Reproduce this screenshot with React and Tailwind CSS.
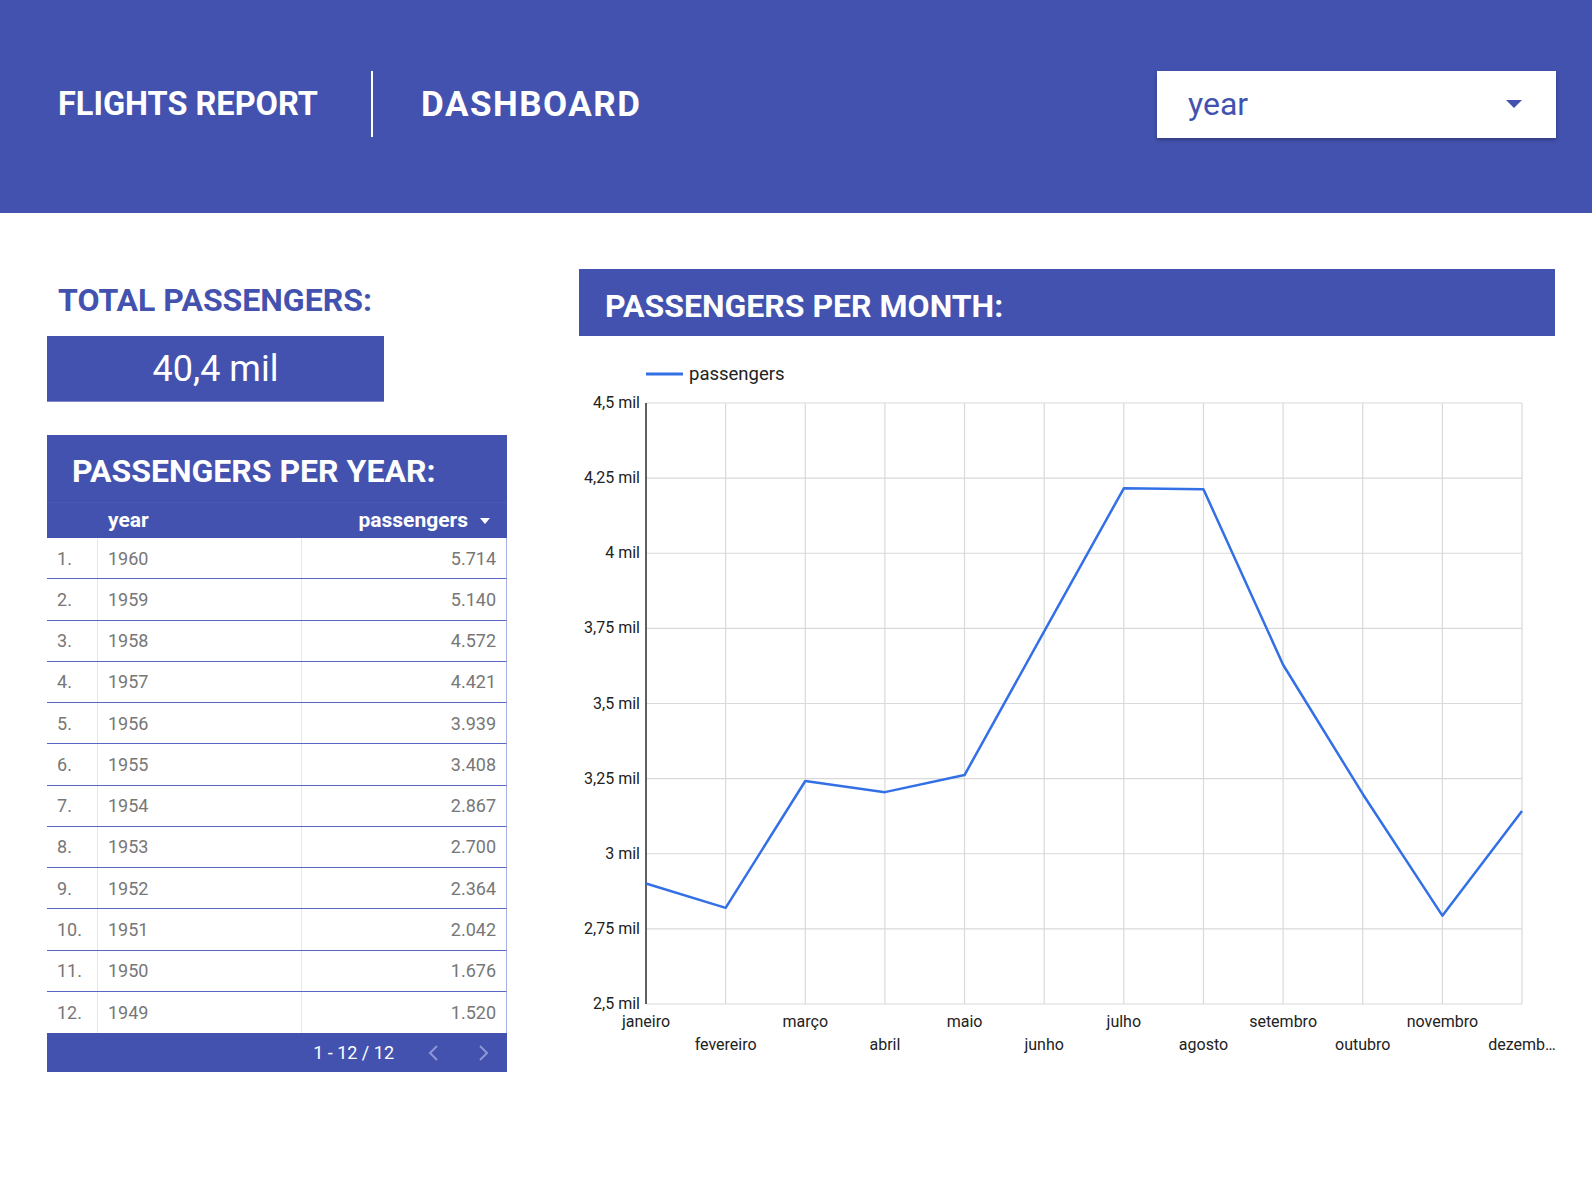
import React from "react";

const years = [
  ["1960", "5.714"],
  ["1959", "5.140"],
  ["1958", "4.572"],
  ["1957", "4.421"],
  ["1956", "3.939"],
  ["1955", "3.408"],
  ["1954", "2.867"],
  ["1953", "2.700"],
  ["1952", "2.364"],
  ["1951", "2.042"],
  ["1950", "1.676"],
  ["1949", "1.520"],
];

const months = [
  ["janeiro", 2901],
  ["fevereiro", 2820],
  ["março", 3242],
  ["abril", 3205],
  ["maio", 3262],
  ["junho", 3740],
  ["julho", 4216],
  ["agosto", 4213],
  ["setembro", 3629],
  ["outubro", 3199],
  ["novembro", 2794],
  ["dezemb…", 3142],
];

const yTicks = ["4,5 mil", "4,25 mil", "4 mil", "3,75 mil", "3,5 mil", "3,25 mil", "3 mil", "2,75 mil", "2,5 mil"];

function Chart() {
  const x0 = 67;
  const x1 = 943;
  const y0 = 67;
  const y1 = 668;
  const step = (x1 - x0) / 11;
  const yOf = (v) => y0 + ((4500 - v) / 2000) * (y1 - y0);
  const pts = months.map((m, i) => `${x0 + i * step},${yOf(m[1])}`).join(" ");
  return (
    <svg width="976" height="730" viewBox="0 0 976 730" style={{ fontFamily: "Roboto, 'Liberation Sans', sans-serif" }}>
      <line x1="67" y1="38" x2="104" y2="38" stroke="#3370e6" strokeWidth="3" />
      <text x="110" y="44" fontSize="18.5" fill="#222">passengers</text>
      {yTicks.map((t, i) => {
        const y = y0 + (i * (y1 - y0)) / 8;
        return (
          <g key={t}>
            <line x1={x0} y1={y} x2={x1} y2={y} stroke="#d9d9d9" strokeWidth="1.2" />
            <text x="61" y={y + 5} fontSize="16" fill="#222" textAnchor="end">{t}</text>
          </g>
        );
      })}
      {months.map((m, i) => {
        const x = x0 + i * step;
        return (
          <g key={m[0]}>
            <line x1={x} y1={y0} x2={x} y2={y1} stroke="#d9d9d9" strokeWidth="1.2" />
            <text x={x} y={i % 2 === 0 ? 691 : 714} fontSize="16" fill="#222" textAnchor="middle">{m[0]}</text>
          </g>
        );
      })}
      <line x1={x0} y1={y0} x2={x0} y2={y1} stroke="#333" strokeWidth="1.5" />
      <polyline points={pts} fill="none" stroke="#3370e6" strokeWidth="2.5" strokeLinejoin="round" />
    </svg>
  );
}

export default function App() {
  return (
    <div className="w-[1592px] h-[1190px] bg-white overflow-hidden" style={{ fontFamily: "Roboto, 'Liberation Sans', sans-serif" }}>
      <div className="h-[213px] bg-[#4352af] flex items-center pb-[5px]">
        <div className="w-[371px] pl-[58px] text-white text-[32.5px] font-bold leading-none whitespace-nowrap">FLIGHTS REPORT</div>
        <div className="w-[2px] h-[66px] bg-white"></div>
        <div className="ml-[48px] text-white text-[35px] font-bold leading-none tracking-[1.5px]">DASHBOARD</div>
        <div className="ml-auto mr-[36px] w-[399px] h-[67px] bg-white shadow-[0_2px_4px_rgba(0,0,0,0.3)] flex items-center pl-[31px] pr-[34px]">
          <span className="text-[32px] text-[#4352af] leading-none">year</span>
          <svg className="ml-auto" width="16" height="8" viewBox="0 0 16 8">
            <polygon points="0,0 16,0 8,8" fill="#4352af" />
          </svg>
        </div>
      </div>
      <div className="flex items-start">
        <div className="ml-[47px] w-[460px] pt-[71px]">
          <div className="pl-[11px] text-[32px] font-bold leading-none text-[#4352af] whitespace-nowrap">TOTAL PASSENGERS:</div>
          <div className="mt-[20px] w-[337px] h-[66px] bg-[#4352af] border-b border-[#7d88cf] flex items-center justify-center text-white text-[36px] leading-none">40,4 mil</div>
          <div className="mt-[33px]">
            <div className="h-[67px] bg-[#4352af] flex items-center pl-[25px] pt-[4px] text-white text-[32px] font-bold leading-none">PASSENGERS PER YEAR:</div>
            <div className="h-[36px] bg-[#4352af] flex items-center text-white text-[21px] font-bold border-t border-[#4a59b4]">
              <div className="w-[51px]"></div>
              <div className="w-[204px] pl-[10px]">year</div>
              <div className="flex-1 flex items-center justify-end pr-[17px]">
                <span>passengers</span>
                <svg className="ml-[12px]" width="10" height="6" viewBox="0 0 10 6">
                  <polygon points="0,0 10,0 5,6" fill="#fff" />
                </svg>
              </div>
            </div>
            {years.map((r, i) => (
              <div
                key={r[0]}
                className={`h-[41.25px] flex items-stretch text-[18px] text-[#777] border-r border-[#a7afe0] ${i < 11 ? "border-b-[1.5px] border-b-[#5866c2]" : ""}`}
              >
                <div className="w-[51px] pl-[10px] flex items-center border-r border-[#e4e6f6]">{i + 1}.</div>
                <div className="w-[204px] pl-[10px] flex items-center border-r border-[#e4e6f6]">{r[0]}</div>
                <div className="flex-1 pr-[10px] flex items-center justify-end">{r[1]}</div>
              </div>
            ))}
            <div className="h-[39px] bg-[#4352af] flex items-center justify-end pr-[17px] text-white text-[18px]">
              <span>1 - 12 / 12</span>
              <svg className="ml-[33px]" width="12" height="18" viewBox="0 0 12 18">
                <polyline points="10,2 3,9 10,16" fill="none" stroke="#8e97d4" strokeWidth="2" />
              </svg>
              <svg className="ml-[39px]" width="12" height="18" viewBox="0 0 12 18">
                <polyline points="2,2 9,9 2,16" fill="none" stroke="#8e97d4" strokeWidth="2" />
              </svg>
            </div>
          </div>
        </div>
        <div className="ml-[72px] w-[976px] pt-[56px]">
          <div className="h-[67px] bg-[#4352af] flex items-center pl-[26px] pt-[6px] text-white text-[32px] font-bold leading-none">PASSENGERS PER MONTH:</div>
          <Chart />
        </div>
      </div>
    </div>
  );
}
